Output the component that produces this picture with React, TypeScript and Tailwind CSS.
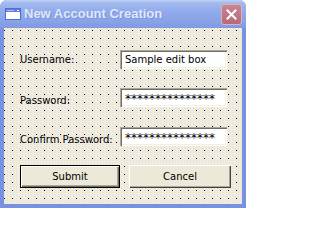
import React from "react";

const FONT = "font-['DejaVu_Sans',sans-serif]";

function WindowIcon() {
  return (
    <svg width="16" height="12" viewBox="0 0 16 12" className="shrink-0">
      <rect x="0.5" y="0.5" width="15" height="11" fill="#ffffff" stroke="#4f6fd6" />
      <rect x="1" y="1" width="14" height="3" fill="#5d7fe0" />
      <rect x="2" y="2" width="7" height="1" fill="#a9bff3" />
      <rect x="12" y="2" width="2" height="1" fill="#ffffff" />
    </svg>
  );
}

function CloseButton() {
  return (
    <div className="w-[21px] h-[21px] rounded-[3px] border border-[#e0b3bb] bg-[linear-gradient(to_bottom,#c98592,#b66a79)] flex items-center justify-center shrink-0">
      <svg width="11" height="11" viewBox="0 0 11 11">
        <path d="M1.5 1.5 L9.5 9.5 M9.5 1.5 L1.5 9.5" stroke="#ffffff" strokeWidth="2" strokeLinecap="square" />
      </svg>
    </div>
  );
}

function Field({ label, value, password, labelDrop }: { label: string; value: string; password?: boolean; labelDrop?: boolean }) {
  return (
    <div className="flex items-center h-[19px]">
      <span className={["w-[100px] text-[10px] leading-[12px] text-black", labelDrop ? "pt-[6px]" : ""].join(" ")}>
        {label}
      </span>
      <div className="w-[107px] h-[19px] bg-white flex items-center pl-[5px] shadow-[inset_1px_1px_0_#aca899,inset_2px_2px_0_#716f64,inset_-1px_-1px_0_#ffffff,inset_-2px_-2px_0_#f1efe2]">
        <span className={password ? "text-[12px] leading-[12px] pt-[3px] text-black" : "text-[10px] leading-[12px] text-black"}>
          {value}
        </span>
      </div>
    </div>
  );
}

export default function App() {
  return (
    <div className={`w-[246px] h-[208px] bg-white ${FONT}`}>
      <div className="w-full h-full flex flex-col rounded-t-[7px] overflow-hidden bg-[#7891e0]">
        {/* title bar */}
        <div className="h-[28px] flex items-center pl-[5px] pr-[4px] bg-[linear-gradient(to_bottom,#c3d3f6_0px,#a2b9ef_3px,#91aaeb_12px,#88a2e8_22px,#7f99e3_28px)]">
          <WindowIcon />
          <span className="ml-[3px] text-[13px] leading-[16px] font-bold text-[#dfe7fa] font-['Liberation_Sans',sans-serif] [text-shadow:1px_1px_0_#7f95d6]">
            New Account Creation
          </span>
          <div className="ml-auto">
            <CloseButton />
          </div>
        </div>

        {/* dialog body with design grid */}
        <div className="flex-1 mx-[4px] mb-[4px] bg-[#efece0] bg-[image:conic-gradient(from_270deg_at_1px_1px,#000000_90deg,transparent_0),conic-gradient(from_270deg_at_1px_1px,#eadcd6_90deg,transparent_0)] bg-[length:8px_8px,3px_2px] bg-[position:0_2px,0_0] pl-[16px] pt-[22px]">
          <Field label="Username:" value="Sample edit box" />
          <div className="mt-[19px]">
            <Field label="Password:" value="***************" password labelDrop />
          </div>
          <div className="mt-[20px]">
            <Field label="Confirm Password:" value="***************" password labelDrop />
          </div>

          <div className="mt-[19px] flex gap-[9px]">
            <button className="w-[100px] h-[23px] border border-black bg-[#ece9d8] text-[10px] text-black shadow-[inset_1px_1px_0_#ffffff,inset_-1px_-1px_0_#716f64,inset_-2px_-2px_0_#aca899]">
              Submit
            </button>
            <button className="w-[102px] h-[23px] bg-[#ece9d8] text-[10px] text-black shadow-[inset_1px_1px_0_#ffffff,inset_-1px_-1px_0_#404040,inset_-2px_-2px_0_#aca899]">
              Cancel
            </button>
          </div>
        </div>
      </div>
    </div>
  );
}
